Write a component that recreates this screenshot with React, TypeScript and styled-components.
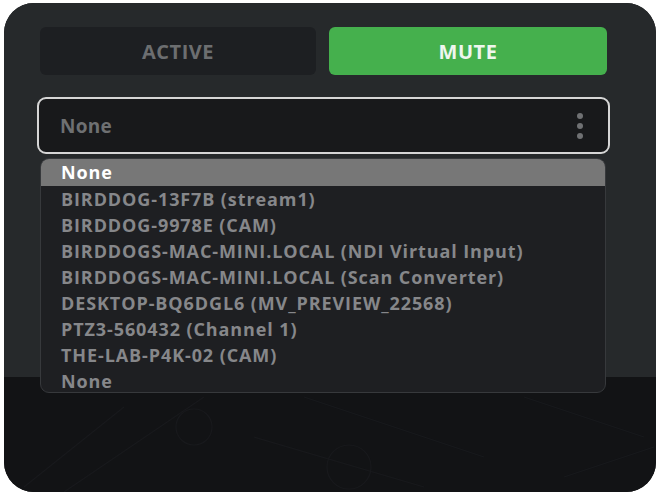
import React from "react";
import styled, { createGlobalStyle } from "styled-components";

const Global = createGlobalStyle`
  html, body { margin: 0; padding: 0; background: #ffffff; }
  body { font-family: "Open Sans", Lato, sans-serif; }
  * { box-sizing: border-box; }
`;

const Frame = styled.div`
  position: relative;
  margin: 3px 0 0 4px;
  width: 652px;
  height: 489px;
  border-radius: 30px;
  overflow: hidden;
  background: #121315;
  display: flex;
  flex-direction: column;
`;

const Top = styled.div`
  height: 374px;
  background: #26292b;
  padding: 24px 50px 0 33px;
  display: flex;
  flex-direction: column;
  gap: 22px;
`;

const Bottom = styled.div`
  flex: 1;
  position: relative;
  background: #121315;
`;

const Toggle = styled.div`
  display: grid;
  grid-template-columns: 276px 278px;
  gap: 13px;
  padding-left: 3px;
`;

const ModeButton = styled.button<{ $on?: boolean }>`
  height: 48px;
  border: none;
  border-radius: 6px;
  background: ${(p) => (p.$on ? "#45b04d" : "#1d1f22")};
  color: ${(p) => (p.$on ? "#eef6ee" : "#6c6e70")};
  font-family: "Open Sans", sans-serif;
  font-weight: 700;
  font-size: 20px;
  letter-spacing: 0.5px;
  display: flex;
  align-items: center;
  justify-content: center;
`;

const Select = styled.div`
  width: 573px;
  height: 57px;
  border: 2px solid #d6d6d6;
  border-radius: 9px;
  background: #18191b;
  display: flex;
  align-items: center;
  justify-content: space-between;
  padding: 0 25px 0 21px;
  color: #6e7072;
  font-weight: 700;
  font-size: 19px;
  letter-spacing: 0.3px;
`;

const Dots = styled.div`
  display: flex;
  flex-direction: column;
  gap: 4px;
`;

const Dot = styled.span`
  width: 6px;
  height: 6px;
  border-radius: 50%;
  background: #6f7173;
`;

const Menu = styled.ul`
  position: absolute;
  left: 36px;
  top: 155px;
  width: 566px;
  height: 235px;
  margin: 0;
  padding: 0;
  list-style: none;
  background: #1e1f22;
  border: 1px solid #37393c;
  border-radius: 9px;
  overflow: hidden;
  z-index: 2;
`;

const Item = styled.li<{ $sel?: boolean }>`
  height: ${(p) => (p.$sel ? "27px" : "26px")};
  line-height: ${(p) => (p.$sel ? "27px" : "26px")};
  padding-left: 20px;
  background: ${(p) => (p.$sel ? "#777777" : "transparent")};
  color: ${(p) => (p.$sel ? "#ffffff" : "#86878a")};
  font-weight: 700;
  font-size: 18px;
  letter-spacing: 0.9px;
  white-space: nowrap;
`;

const Texture = styled.svg`
  position: absolute;
  inset: 0;
  width: 100%;
  height: 100%;
`;

const items = [
  "BIRDDOG-13F7B (stream1)",
  "BIRDDOG-9978E (CAM)",
  "BIRDDOGS-MAC-MINI.LOCAL (NDI Virtual Input)",
  "BIRDDOGS-MAC-MINI.LOCAL (Scan Converter)",
  "DESKTOP-BQ6DGL6 (MV_PREVIEW_22568)",
  "PTZ3-560432 (Channel 1)",
  "THE-LAB-P4K-02 (CAM)",
  "None",
];

export default function App() {
  return (
    <>
      <Global />
      <Frame>
        <Top>
          <Toggle>
            <ModeButton>ACTIVE</ModeButton>
            <ModeButton $on>MUTE</ModeButton>
          </Toggle>
          <Select>
            <span>None</span>
            <Dots>
              <Dot />
              <Dot />
              <Dot />
            </Dots>
          </Select>
        </Top>
        <Bottom>
          <Texture viewBox="0 0 652 115" preserveAspectRatio="none">
            <g fill="none" stroke="#18191c" strokeWidth="1.2">
              <path d="M20 110 L120 30 M60 115 L200 20 M250 60 L420 110 M300 20 L480 80" />
              <circle cx="190" cy="50" r="18" />
              <circle cx="345" cy="90" r="22" />
              <path d="M520 20 L640 60 M560 100 L650 70" />
            </g>
          </Texture>
        </Bottom>
        <Menu>
          <Item $sel>None</Item>
          {items.map((t, i) => (
            <Item key={i}>{t}</Item>
          ))}
        </Menu>
      </Frame>
    </>
  );
}
